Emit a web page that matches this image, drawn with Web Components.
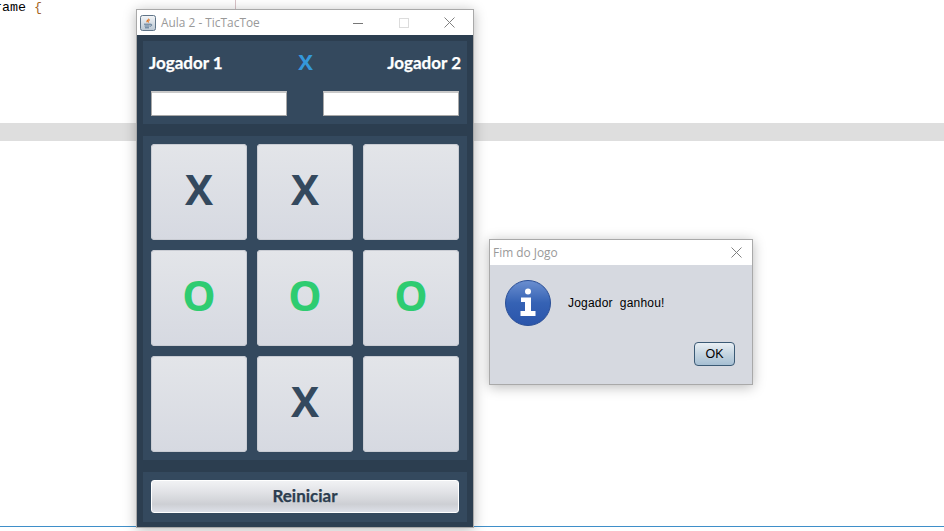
<!DOCTYPE html>
<html>
<head>
<meta charset="utf-8">
<title>TicTacToe</title>
<style>
    html, body { margin: 0; padding: 0; background: #fff; }
</style>
</head>
<body>
<desktop-screen>
    <app-window slot="windows" heading="Aula 2 - TicTacToe" kind="frame" style="left:136px;top:9px;width:336px;height:517px">
        <java-icon slot="icon"></java-icon>
        <game-view></game-view>
    </app-window>
    <app-window slot="windows" heading="Fim do Jogo" kind="dialog" style="left:489px;top:239px;width:262px;height:144px">
        <message-box text="Jogador  ganhou!"></message-box>
    </app-window>
</desktop-screen>

<template id="template-desktop-screen">
    <style>
        :host { display: block; position: relative; width: 944px; height: 531px; overflow: hidden; background: #fff; }
        .code { height: 123px; box-sizing: border-box; padding-top: 1px; font: 13.33px/14px "Liberation Mono", monospace; color: #000; margin-left: -6px; white-space: pre; }
        .code span { color: #a5661f; }
        .band { height: 18px; background: #dedede; }
        .rule { position: absolute; left: 235px; top: 0; width: 1px; height: 9px; background: #d9c3c8; }
        .taskbar { position: absolute; left: 0; right: 0; bottom: 4px; height: 1px; background: #3f8fc9; }
    </style>
    <div class="code">rame <span>{</span></div>
    <div class="band"></div>
    <div class="rule"></div>
    <div class="taskbar"></div>
    <slot name="windows"></slot>
</template>

<template id="template-app-window">
    <style>
        :host { display: flex; flex-direction: column; position: absolute; border: 1px solid #a9a9a9; box-shadow: 0 2px 12px rgba(0,0,0,.28); background: #fff; }
        .title { flex: none; height: 25px; display: flex; align-items: center; background: #fff; font: 11.9px "Open Sans", sans-serif; color: #999; }
        .title ::slotted(java-icon) { margin: 0 5px 0 3px; }
        .text { flex: 1; white-space: nowrap; padding-bottom: 2px; }
        .controls { display: flex; height: 100%; }
        .ctl { width: 46px; display: flex; align-items: center; justify-content: center; }
        .ctl svg { display: block; }
        .content { flex: 1; min-height: 0; }
        :host([kind="dialog"]) .text { margin-left: 3px; }
        :host([kind="dialog"]) .min, :host([kind="dialog"]) .max { display: none; }
        :host([kind="dialog"]) .ctl { width: 30px; }
    </style>
    <div class="title">
        <slot name="icon"></slot>
        <span class="text"></span>
        <div class="controls">
            <div class="ctl min"><svg width="10" height="10"><path d="M0 5.5H10" stroke="#777" fill="none"/></svg></div>
            <div class="ctl max"><svg width="10" height="10"><rect x=".5" y=".5" width="9" height="9" stroke="#dcdcdc" fill="none"/></svg></div>
            <div class="ctl"><svg width="12" height="12"><path d="M.5 .5L10.5 10.5M10.5 .5L.5 10.5" stroke="#808080" fill="none"/></svg></div>
        </div>
    </div>
    <div class="content"><slot></slot></div>
</template>

<template id="template-java-icon">
    <style>
        :host { display: block; width: 16px; height: 16px; flex: none; }
        svg { display: block; }
    </style>
    <svg width="16" height="16" viewBox="0 0 16 16">
        <defs><linearGradient id="g" x1="0" y1="0" x2="0" y2="1"><stop offset="0" stop-color="#f4f6f8"/><stop offset="1" stop-color="#b9c6d2"/></linearGradient></defs>
        <rect x=".5" y=".5" width="15" height="15" rx="2" fill="url(#g)" stroke="#5f7488"/>
        <path d="M8.6 2.2C9.4 4 6.2 4.8 6.4 6.6C6.5 7.4 7.2 8 7.2 8C6.8 6.6 9.8 5.8 8.6 2.2Z" fill="#e2711d"/>
        <path d="M10 4.6C8.6 5.4 8 6.2 8.6 7.6" stroke="#e2711d" fill="none"/>
        <path d="M4 9.2H10M4.6 11H9.6M5 12.8H9M10 9.2C12.4 8.8 12.4 11 10 11.2" stroke="#4a6a88" fill="none" stroke-width=".9"/>
    </svg>
</template>

<template id="template-game-view">
    <style>
        :host { display: flex; flex-direction: column; gap: 12px; height: 100%; box-sizing: border-box; padding: 6px 6px 5px; background: #2c3e50; font-family: Lato, sans-serif; }
        .panel { background: #34495e; }
        .players { height: 83px; box-sizing: border-box; padding: 0 6px; display: grid; grid-template-columns: 1fr auto 1fr; grid-template-rows: 42px auto; }
        .name { font-weight: 700; font-size: 17px; -webkit-text-stroke: .25px #fff; color: #fff; display: flex; align-items: center; }
        .name.right { justify-content: flex-end; }
        .turn { font: 700 22px "Open Sans", sans-serif; color: #3498db; display: flex; align-items: center; justify-content: center; padding-bottom: 3px; padding-left: 1px; }
        .inputs { grid-column: 1 / 4; display: flex; justify-content: space-between; padding: 8px 2px 0; }
        input { width: 136px; height: 25px; box-sizing: border-box; border: 1px solid #a8a8a8; border-top: 2px solid #c9c9c9; background: #fff; padding: 0; margin: 0; display: block; }
        .board { height: 324px; box-sizing: border-box; padding: 8px; display: grid; grid-template-columns: repeat(3, 96px); grid-auto-rows: 96px; gap: 10px; }
        .foot { flex: 1; box-sizing: border-box; padding: 8px; }
        .reset { width: 100%; height: 33px; box-sizing: border-box; border: 1px solid #fff; border-radius: 3px; padding: 0 0 2px; margin: 0; display: block; font: 700 17px Lato, sans-serif; -webkit-text-stroke: .25px #2c3e50; color: #2c3e50; background: linear-gradient(#f1f2f4, #e4e5e9 30%, #cdcfd4 75%, #dde0e8); }
    </style>
    <div class="panel players">
        <div class="name">Jogador 1</div>
        <div class="turn">X</div>
        <div class="name right">Jogador 2</div>
        <div class="inputs"><input type="text"><input type="text"></div>
    </div>
    <div class="panel board">
        <game-cell mark="X"></game-cell>
        <game-cell mark="X"></game-cell>
        <game-cell></game-cell>
        <game-cell mark="O"></game-cell>
        <game-cell mark="O"></game-cell>
        <game-cell mark="O"></game-cell>
        <game-cell></game-cell>
        <game-cell mark="X"></game-cell>
        <game-cell></game-cell>
    </div>
    <div class="panel foot"><button class="reset">Reiniciar</button></div>
</template>

<template id="template-game-cell">
    <style>
        :host { display: flex; align-items: center; justify-content: center; box-sizing: border-box; padding-bottom: 8px; border-radius: 4px; background: linear-gradient(#e3e5e9, #d6d9e1); box-shadow: inset 0 0 0 1px #c9ccd3; font: 700 42px "Open Sans", sans-serif; color: #34495e; }
        :host([mark="O"]) { color: #2ecc71; }
    </style>
    <span></span>
</template>

<template id="template-message-box">
    <style>
        :host { display: block; height: 100%; box-sizing: border-box; background: #d6d9e0; position: relative; padding: 15px 17px 0 15px; font: 12px "Liberation Sans", Arial, sans-serif; color: #000; }
        .row { display: flex; align-items: center; gap: 17px; }
        .msg { white-space: pre; letter-spacing: .2px; }
        .actions { display: flex; justify-content: flex-end; margin-top: 16px; }
        button { width: 41px; height: 24px; box-sizing: border-box; border: 1px solid #3b5a75; border-radius: 4px; padding: 0; font: 12.5px "Liberation Sans", Arial, sans-serif; color: #000; background: linear-gradient(#e9eff4, #c5d5e1 50%, #a6bfd3); }
    </style>
    <div class="row">
        <info-icon></info-icon>
        <span class="msg"></span>
    </div>
    <div class="actions"><button>OK</button></div>
</template>

<template id="template-info-icon">
    <style>
        :host { display: block; width: 46px; height: 46px; flex: none; }
        svg { display: block; }
    </style>
    <svg width="46" height="46" viewBox="0 0 46 46">
        <defs>
            <linearGradient id="b" x1="0" y1="0" x2="0" y2="1"><stop offset="0" stop-color="#6b8fd0"/><stop offset=".5" stop-color="#3562b4"/><stop offset="1" stop-color="#2a55ab"/></linearGradient>
        </defs>
        <circle cx="23" cy="23" r="22.5" fill="url(#b)" stroke="#2b4f96"/>
        <circle cx="23" cy="11.5" r="3" fill="#fff"/>
        <path d="M16 17.5H26V31H30.5V36H15.5V31H20V22H16Z" fill="#fff"/>
    </svg>
</template>

<script>
    function define(name, attrs) {
        const template = document.querySelector('#template-' + name).content
        customElements.define(name, class extends HTMLElement {
            constructor() {
                super()
                this.attachShadow({ mode: 'open' }).appendChild(template.cloneNode(true))
            }
            connectedCallback() {
                if (attrs) attrs(this, this.shadowRoot)
            }
        })
    }
    define('desktop-screen')
    define('app-window', (el, root) => {
        root.querySelector('.text').textContent = el.getAttribute('heading')
    })
    define('java-icon')
    define('game-view')
    define('game-cell', (el, root) => {
        root.querySelector('span').textContent = el.getAttribute('mark') || ''
    })
    define('message-box', (el, root) => {
        root.querySelector('.msg').textContent = el.getAttribute('text')
    })
    define('info-icon')
</script>
</body>
</html>
